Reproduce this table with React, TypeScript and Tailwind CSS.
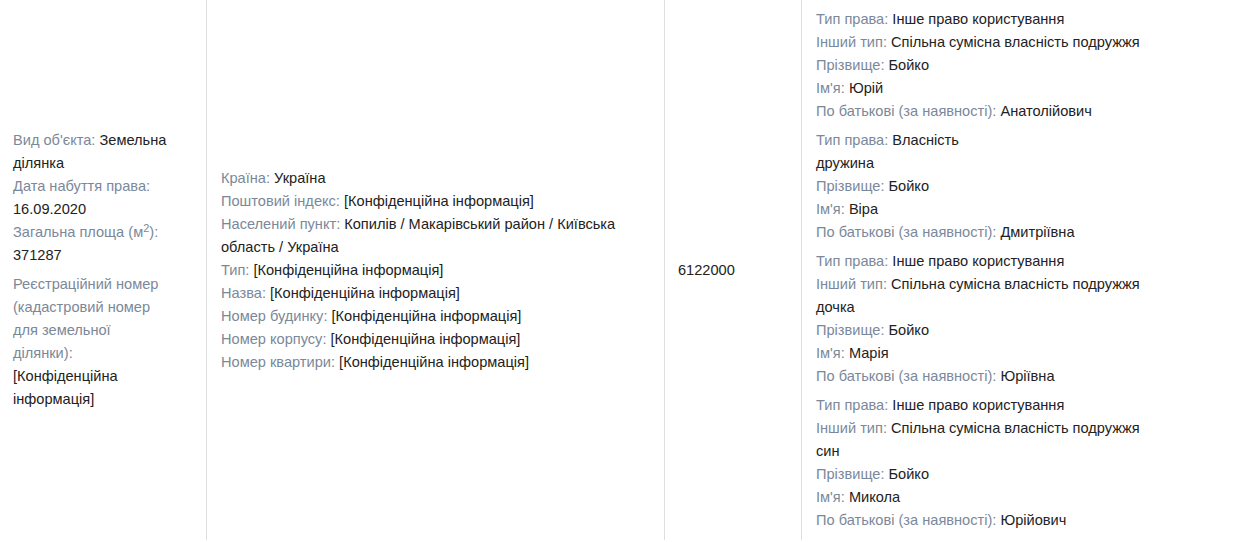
import { Fragment, type ReactNode } from 'react';

type Field = { label: ReactNode; value: ReactNode };

const address: Field[] = [
  { label: 'Країна', value: 'Україна' },
  { label: 'Поштовий індекс', value: '[Конфіденційна інформація]' },
  { label: 'Населений пункт', value: 'Копилів / Макарівський район / Київська область / Україна' },
  { label: 'Тип', value: '[Конфіденційна інформація]' },
  { label: 'Назва', value: '[Конфіденційна інформація]' },
  { label: 'Номер будинку', value: '[Конфіденційна інформація]' },
  { label: 'Номер корпусу', value: '[Конфіденційна інформація]' },
  { label: 'Номер квартири', value: '[Конфіденційна інформація]' },
];

type Owner = {
  right: string;
  other?: string;
  relation?: string;
  surname: string;
  name: string;
  patronymic: string;
};

const owners: Owner[] = [
  {
    right: 'Інше право користування',
    other: 'Спільна сумісна власність подружжя',
    surname: 'Бойко',
    name: 'Юрій',
    patronymic: 'Анатолійович',
  },
  { right: 'Власність', relation: 'дружина', surname: 'Бойко', name: 'Віра', patronymic: 'Дмитріївна' },
  {
    right: 'Інше право користування',
    other: 'Спільна сумісна власність подружжя',
    relation: 'дочка',
    surname: 'Бойко',
    name: 'Марія',
    patronymic: 'Юріївна',
  },
  {
    right: 'Інше право користування',
    other: 'Спільна сумісна власність подружжя',
    relation: 'син',
    surname: 'Бойко',
    name: 'Микола',
    patronymic: 'Юрійович',
  },
];

function Line({ label, value }: Field) {
  return (
    <div>
      <span className="text-[#7b8899]">{label}: </span>
      <span className="text-[#222]">{value}</span>
    </div>
  );
}

export default function App() {
  return (
    <div
      className="w-[1234px] h-[542px] overflow-hidden bg-white text-[14.6px] leading-[23px]"
      style={{ fontFamily: '"Liberation Sans", Arial, sans-serif' }}
    >
      <div className="flex min-h-[540px]">
        {/* Object */}
        <div className="w-[206px] shrink-0 flex flex-col justify-center pl-[13px] pr-[35px] py-2">
          <Line label="Вид об'єкта" value="Земельна ділянка" />
          <Line label="Дата набуття права" value="16.09.2020" />
          <Line
            label={
              <>
                Загальна площа (м<sup>2</sup>)
              </>
            }
            value="371287"
          />
          <div className="mt-1.5">
            <Line label="Реєстраційний номер (кадастровий номер для земельної ділянки)" value="[Конфіденційна інформація]" />
          </div>
        </div>

        {/* Address */}
        <div className="w-[458px] shrink-0 border-l border-[#dedede] flex flex-col justify-center px-[14px] py-2">
          {address.map((f) => (
            <Line key={f.label as string} label={f.label} value={f.value} />
          ))}
        </div>

        {/* Code */}
        <div className="w-[137px] shrink-0 border-l border-[#dedede] flex items-center px-[13px] py-2 text-[#222]">
          6122000
        </div>

        {/* Owners */}
        <div className="flex-1 border-l border-[#dedede] flex flex-col justify-center space-y-1.5 px-[14px] py-2">
          {owners.map((o, i) => (
            <div key={i}>
              <div>
                <span className="text-[#7b8899]">Тип права: </span>
                <span className="text-[#222]">{o.right}</span>
              </div>
              {o.other && <Line label="Інший тип" value={o.other} />}
              {o.relation && <div className="text-[#222]">{o.relation}</div>}
              <Fragment>
                <Line label="Прізвище" value={o.surname} />
                <Line label="Ім'я" value={o.name} />
                <Line label="По батькові (за наявності)" value={o.patronymic} />
              </Fragment>
            </div>
          ))}
        </div>
      </div>
    </div>
  );
}
